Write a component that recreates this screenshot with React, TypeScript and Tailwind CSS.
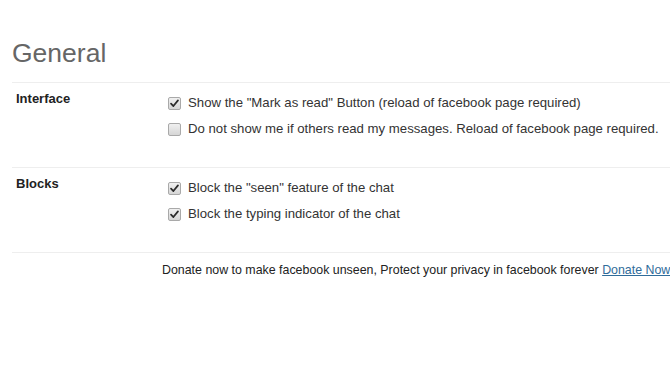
import React from 'react';

type Option = { label: string; checked: boolean };

const sections: { title: string; options: Option[] }[] = [
  {
    title: 'Interface',
    options: [
      { label: 'Show the "Mark as read" Button (reload of facebook page required)', checked: true },
      { label: 'Do not show me if others read my messages. Reload of facebook page required.', checked: false },
    ],
  },
  {
    title: 'Blocks',
    options: [
      { label: 'Block the "seen" feature of the chat', checked: true },
      { label: 'Block the typing indicator of the chat', checked: true },
    ],
  },
];

function Checkbox({ checked }: { checked: boolean }) {
  return (
    <span className="relative flex h-[13px] w-[13px] shrink-0 items-center justify-center rounded-[2px] border border-[#a9a9a9] bg-gradient-to-b from-[#f0f0f0] to-[#d6d6d6]">
      {checked && (
        <svg viewBox="0 0 12 12" className="h-[11px] w-[11px]">
          <path d="M2.2 6.2 L4.8 8.8 L9.8 2.6" fill="none" stroke="#2b2b2b" strokeWidth="1.9" strokeLinecap="round" strokeLinejoin="round" />
        </svg>
      )}
    </span>
  );
}

export default function App() {
  return (
    <div className="h-[371px] w-[670px] overflow-hidden bg-white pl-[12px] font-['Liberation_Sans',Arial,sans-serif] text-[13px] text-[#333]">
      <h1 className="mt-[38px] mb-[14px] text-[26.5px] leading-[30px] font-normal text-[#666]">General</h1>

      {sections.map((s) => (
        <div key={s.title} className="flex border-t border-[#eeeeee] pt-[7px] pb-[25px]">
          <div className="w-[156px] shrink-0 pl-[4px] text-[13px] leading-[18px] font-bold text-[#222]">{s.title}</div>
          <div className="flex flex-col">
            {s.options.map((o) => (
              <div key={o.label} className="flex h-[26px] items-center gap-[7px] whitespace-nowrap text-[13.2px] text-[#333]">
                <Checkbox checked={o.checked} />
                <span>{o.label}</span>
              </div>
            ))}
          </div>
        </div>
      ))}

      <div className="border-t border-[#eeeeee] pt-[8px] pl-[150px] whitespace-nowrap text-[12.4px] leading-[18px] text-[#222]">
        Donate now to make facebook unseen, Protect your privacy in facebook forever{' '}
        <a className="text-[#2f6c9a] underline">Donate Now</a>
      </div>
    </div>
  );
}
